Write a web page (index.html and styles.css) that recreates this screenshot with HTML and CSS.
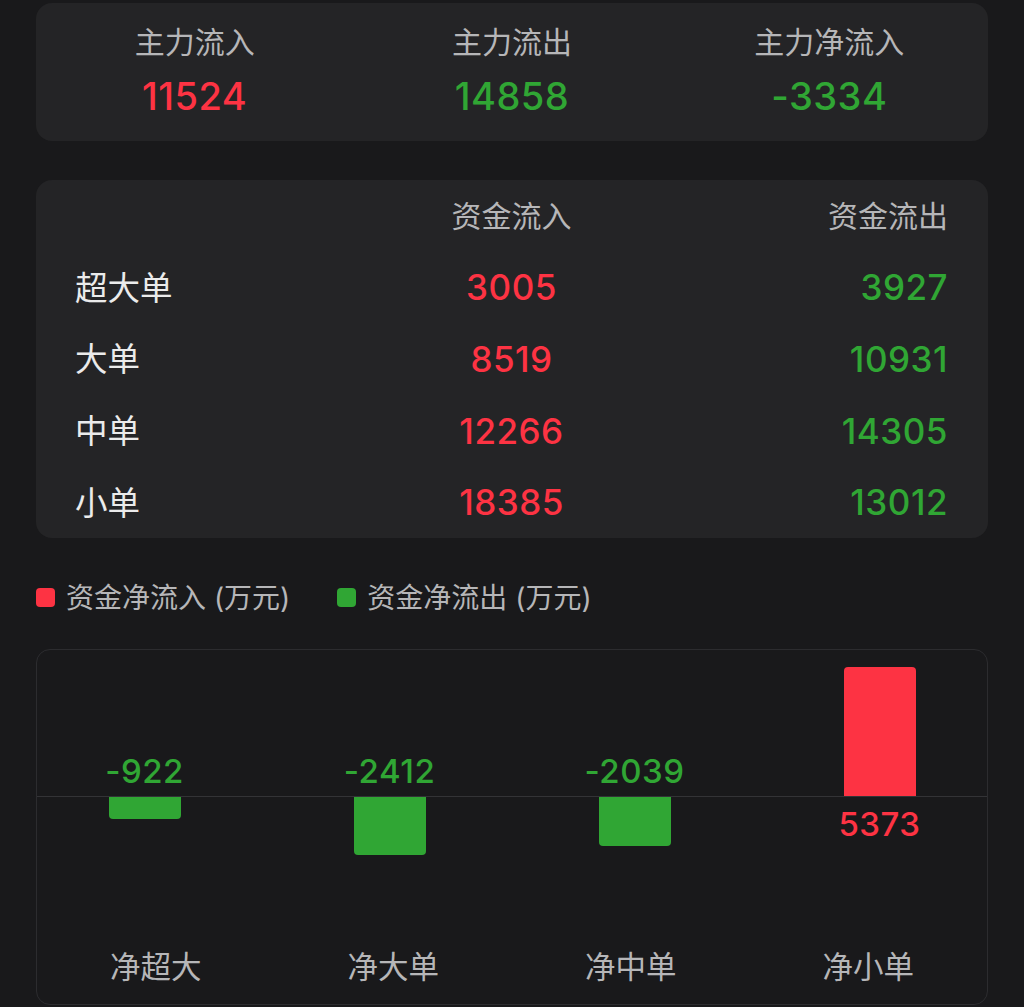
FILE: index.html
```html
<!DOCTYPE html>
<html lang="zh-CN">
<head>
    <meta charset="UTF-8">
    <meta name="viewport" content="width=device-width, initial-scale=1.0">
    <title>资金流向</title>
    <link rel="stylesheet" href="styles.css">
</head>
<body>
    <div class="page">
        <div class="card summary">
            <div class="summary-item">
                <div class="summary-label">主力流入</div>
                <div class="summary-value up">11524</div>
            </div>
            <div class="summary-item">
                <div class="summary-label">主力流出</div>
                <div class="summary-value down">14858</div>
            </div>
            <div class="summary-item">
                <div class="summary-label">主力净流入</div>
                <div class="summary-value down">-3334</div>
            </div>
        </div>

        <div class="card flow-table">
            <div class="cell"></div>
            <div class="cell head center">资金流入</div>
            <div class="cell head right">资金流出</div>

            <div class="cell name">超大单</div>
            <div class="cell num center up">3005</div>
            <div class="cell num right down">3927</div>

            <div class="cell name">大单</div>
            <div class="cell num center up">8519</div>
            <div class="cell num right down">10931</div>

            <div class="cell name">中单</div>
            <div class="cell num center up">12266</div>
            <div class="cell num right down">14305</div>

            <div class="cell name">小单</div>
            <div class="cell num center up">18385</div>
            <div class="cell num right down">13012</div>
        </div>

        <div class="legend">
            <div class="legend-item"><span class="swatch up-bg"></span>资金净流入 (万元)</div>
            <div class="legend-item"><span class="swatch down-bg"></span>资金净流出 (万元)</div>
        </div>

        <div class="chart">
            <!-- above the zero line -->
            <div class="chart-upper">
                <div class="plot-row">
                    <div class="plot-col"><div class="bar-label down">-922</div></div>
                    <div class="plot-col"><div class="bar-label down">-2412</div></div>
                    <div class="plot-col"><div class="bar-label down">-2039</div></div>
                    <div class="plot-col"><div class="bar pos" style="height: 129px"></div></div>
                </div>
            </div>
            <!-- below the zero line -->
            <div class="chart-lower">
                <div class="plot-row">
                    <div class="plot-col"><div class="bar neg" style="height: 22px"></div></div>
                    <div class="plot-col"><div class="bar neg" style="height: 58px"></div></div>
                    <div class="plot-col"><div class="bar neg" style="height: 49px"></div></div>
                    <div class="plot-col"><div class="bar-label up below">5373</div></div>
                </div>
            </div>
            <div class="chart-axis">
                <div>净超大</div>
                <div>净大单</div>
                <div>净中单</div>
                <div>净小单</div>
            </div>
        </div>
    </div>
</body>
</html>
```

FILE: styles.css
```css
body {
    margin: 0;
    background-color: #19191b;
    font-family: "Inter", "Noto Sans CJK SC", sans-serif;
    color: #b6b6b8;
}

.page {
    padding: 3px 36px 0;
}

.card {
    background-color: #242426;
    border-radius: 16px;
}

.up {
    color: #fd3343;
}

.down {
    color: #30a634;
}

.up-bg {
    background-color: #fd3343;
}

.down-bg {
    background-color: #30a634;
}

/* summary card */
.summary {
    display: grid;
    grid-template-columns: repeat(3, 1fr);
    padding: 21px 0 23px;
    text-align: center;
}

.summary-label {
    font-size: 30px;
    line-height: 36px;
    color: #b6b6b8;
}

.summary-value {
    margin-top: 14px;
    font-size: 38px;
    line-height: 44px;
    font-weight: 500;
    letter-spacing: 0.5px;
}

/* in / out table */
.flow-table {
    display: grid;
    grid-template-columns: repeat(3, 1fr);
    grid-auto-rows: 71.6px;
    margin-top: 39px;
    padding: 0 40px 0 39px;
}

.cell {
    display: flex;
    align-items: center;
}

.cell.center {
    justify-content: center;
}

.cell.right {
    justify-content: flex-end;
}

.head {
    font-size: 30px;
    color: #b6b6b8;
    padding-bottom: 4px;
}

.name {
    font-size: 32.5px;
    color: #ebebeb;
    padding-bottom: 4px;
}

.num {
    font-size: 35px;
    font-weight: 500;
    letter-spacing: 0.5px;
}

/* legend */
.legend {
    display: flex;
    gap: 47px;
    margin-top: 42px;
    font-size: 28px;
    line-height: 36px;
}

.legend-item {
    display: flex;
    align-items: center;
}

.swatch {
    width: 19px;
    height: 19px;
    border-radius: 4px;
    margin-right: 11px;
}

/* bar chart */
.chart {
    margin-top: 33px;
    border: 1px solid #2c2c2f;
    border-radius: 14px;
}

.chart-upper {
    height: 146px;
    border-bottom: 1px solid #333336;
}

.chart-lower {
    height: 152px;
}

.plot-row {
    display: grid;
    grid-template-columns: repeat(4, 1fr);
    height: 100%;
    margin: 0 -15px;
}

.plot-col {
    display: flex;
    flex-direction: column;
    align-items: center;
}

.chart-upper .plot-col {
    justify-content: flex-end;
}

.bar {
    width: 72px;
}

.bar.pos {
    background-color: #fd3343;
    border-radius: 4px 4px 0 0;
}

.bar.neg {
    background-color: #30a634;
    border-radius: 0 0 4px 4px;
}

.bar-label {
    font-size: 33px;
    line-height: 36px;
    font-weight: 500;
    letter-spacing: 0.5px;
    margin-bottom: 7px;
}

.bar-label.below {
    margin-top: 9px;
    margin-bottom: 0;
}

.chart-axis {
    display: grid;
    grid-template-columns: repeat(4, 1fr);
    padding-bottom: 19px;
    font-size: 30.5px;
    line-height: 36px;
    text-align: center;
}
```
